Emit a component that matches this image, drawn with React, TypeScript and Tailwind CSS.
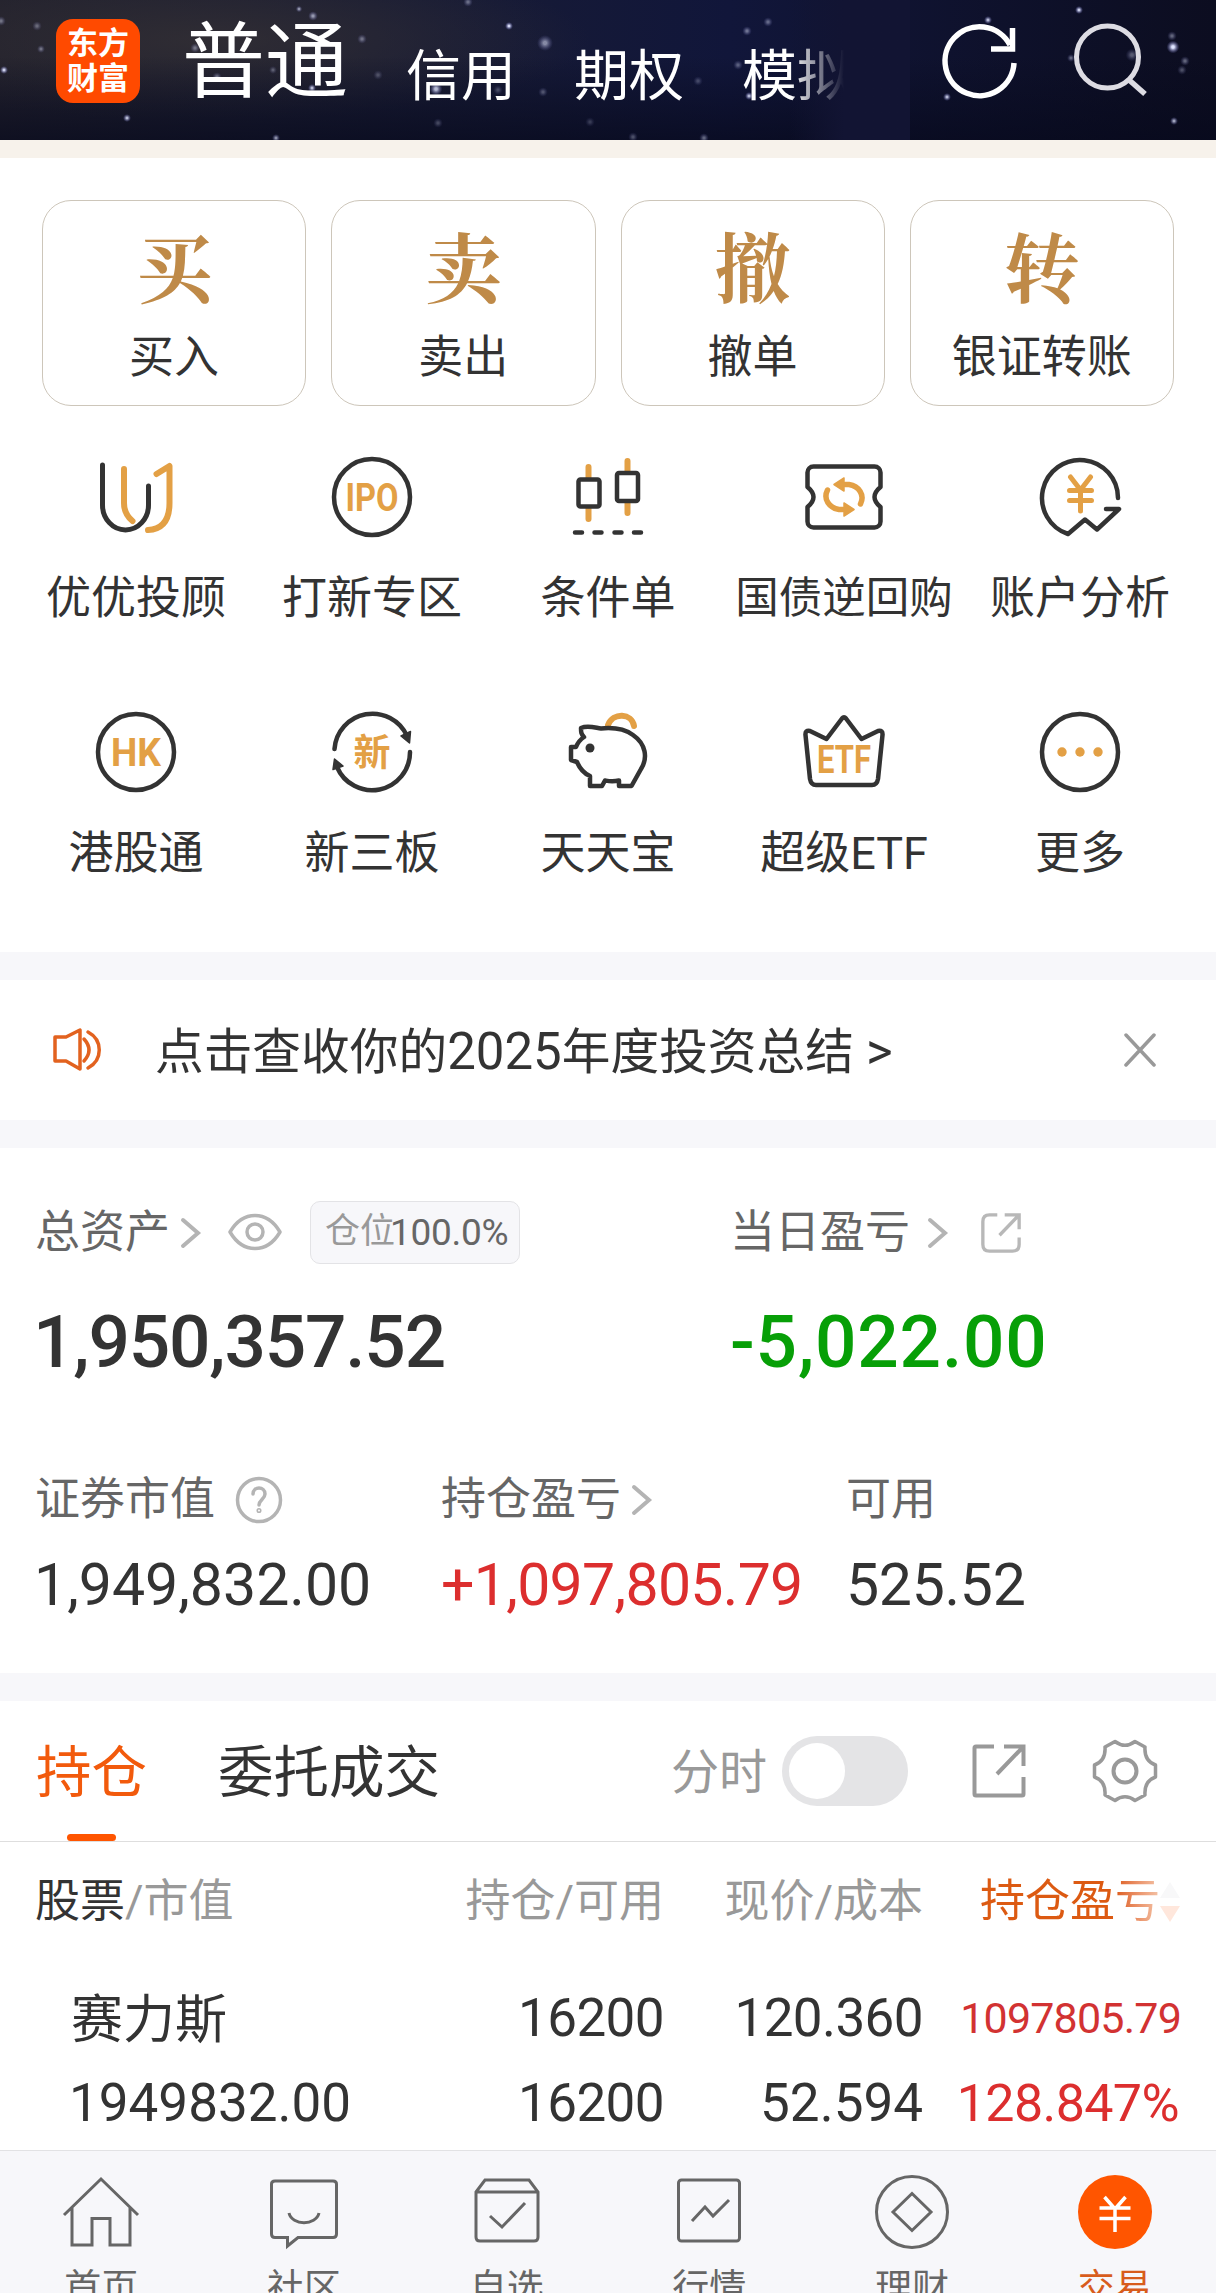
import type { ReactNode } from 'react'

const DARK = '#333333'
const GOLD = '#e3a045'

interface Tool {
  label: string
  icon: ReactNode
  labelClass?: string
}

const actions = [
  { glyph: '买', label: '买入' },
  { glyph: '卖', label: '卖出' },
  { glyph: '撤', label: '撤单' },
  { glyph: '转', label: '银证转账' },
]

// x, y, radius, opacity
const stars = [
  [4, 70, 2.5, 0.9], [1, 21, 3, 0.4], [37, 26, 3, 0.35], [41, 49, 2.5, 0.4], [127, 118, 2.5, 0.8],
  [299, 9, 2, 0.6], [313, 16, 3, 0.6], [362, 39, 3, 0.4], [195, 48, 3, 0.4], [217, 77, 3, 0.4],
  [273, 70, 2.5, 0.3], [312, 88, 2.5, 0.8], [276, 138, 2.5, 0.6], [468, 2, 3, 0.4], [509, 26, 2.5, 0.95],
  [545, 43, 5, 0.55], [436, 89, 4, 0.8], [378, 75, 3, 0.25], [543, 92, 3, 0.3], [438, 123, 3, 0.25],
  [498, 90, 3, 0.25], [590, 122, 3, 0.2], [633, 137, 3, 0.3], [704, 138, 3, 0.4], [747, 31, 3, 0.45],
  [768, 22, 3, 0.4], [738, 65, 3, 0.35], [698, 81, 3, 0.25], [749, 96, 2.5, 0.8], [947, 97, 2.5, 0.8],
  [988, 20, 2.5, 0.8], [1079, 10, 2.5, 0.9], [1173, 47, 4, 1], [1172, 36, 3, 0.4], [1185, 61, 3, 0.4],
  [1182, 70, 3, 0.3], [1174, 121, 2.5, 0.7], [1071, 58, 2.5, 0.4], [1011, 76, 2.5, 0.5], [1132, 55, 4, 0.35],
]

function Icon({ children, size = 96 }: { children: ReactNode; size?: number }) {
  const h = size / 2
  return (
    <svg
      width={size}
      height={size}
      viewBox={`${-h} ${-h} ${size} ${size}`}
      fill="none"
      strokeLinecap="round"
      strokeLinejoin="round"
      className="block shrink-0"
    >
      {children}
    </svg>
  )
}

function IconText({ children, width, y, size }: { children: string; width: number; y: number; size: number }) {
  return (
    <text
      x={-width / 2}
      y={y}
      textLength={width}
      lengthAdjust="spacingAndGlyphs"
      fontSize={size}
      fill={GOLD}
      className="font-['Roboto','Noto_Sans_CJK_SC',sans-serif] font-bold"
    >
      {children}
    </text>
  )
}

const tools: Tool[] = [
  {
    label: '优优投顾',
    icon: (
      <Icon>
        <path d="M-33.5 -32V8a23 25 0 0 0 46 0V-11" stroke={DARK} strokeWidth={5} />
        <path d="M-12 -28V6Q-12 17 -3.5 24" stroke={GOLD} strokeWidth={6} />
        <path d="M20.5 -23L33.5 -31V6Q33.5 32 12 33" stroke={GOLD} strokeWidth={6} />
      </Icon>
    ),
  },
  {
    label: '打新专区',
    icon: (
      <Icon>
        <circle r={38} stroke={DARK} strokeWidth={4.5} />
        <IconText width={53} y={13.5} size={38}>IPO</IconText>
      </Icon>
    ),
  },
  {
    label: '条件单',
    icon: (
      <Icon>
        <path d="M-19.5 -30V-19M-19.5 11V22M19.5 -36V-26M19.5 6V16" stroke={GOLD} strokeWidth={6} />
        <rect x={-29.5} y={-17.5} width={21} height={27} rx={2} stroke={DARK} strokeWidth={4.5} />
        <rect x={9} y={-24} width={21} height={28} rx={2} stroke={DARK} strokeWidth={4.5} />
        <path d="M-33 35.5h7M-13.500 35.500h7M6.500 35.500h7M26 35.500h7" stroke={DARK} strokeWidth={4.5} />
      </Icon>
    ),
  },
  {
    label: '国债逆回购',
    labelClass: 'text-[43.5px]',
    icon: (
      <Icon>
        <path
          d="M-30.500 -30.500H30.500A6 6 0 0 1 36.500 -24.500V-10Q24.500 0 36.500 10V24.500A6 6 0 0 1 30.500 30.500H-30.500A6 6 0 0 1 -36.500 24.500V10Q-24.500 0 -36.500 -10V-24.500A6 6 0 0 1 -30.500 -30.500Z"
          stroke={DARK}
          strokeWidth={4.5}
        />
        <path d="M1 -12.500H5C15 -11 21 -2 16.500 7M-1 12.500H-5C-15 11 -21 2 -16.500 -7" stroke={GOLD} strokeWidth={5.5} />
        <path d="M-10 -12.500L0 -19V-6ZM10 12.500L0 19V6Z" fill={GOLD} stroke={GOLD} strokeWidth={1.5} />
      </Icon>
    ),
  },
  {
    label: '账户分析',
    icon: (
      <Icon>
        <path d="M38 1A38 38 0 1 0 -12 37L5 22.500L17 32.500L39 12H26" stroke={DARK} strokeWidth={4.5} />
        <path d="M-9.500 -20L.5 -7L10.500 -20M.5 -7V14M-10.500 -6.500H11.500M-10.500 3.500H11.500" stroke={GOLD} strokeWidth={5} />
      </Icon>
    ),
  },
  {
    label: '港股通',
    icon: (
      <Icon>
        <circle r={38} stroke={DARK} strokeWidth={4.5} />
        <IconText width={50} y={13.5} size={38}>HK</IconText>
      </Icon>
    ),
  },
  {
    label: '新三板',
    icon: (
      <Icon>
        <path d="M-37.500 -3A38 38 0 0 1 35 -16M38 0A38 38 0 0 1 -35 15" stroke={DARK} strokeWidth={4.5} />
        <path d="M29 -16L38.500 -20.500L37.500 -9ZM-29 14L-39 17.500L-37.500 7Z" fill={DARK} stroke={DARK} strokeWidth={1.5} />
        <IconText width={37} y={14} size={37}>新</IconText>
      </Icon>
    ),
  },
  {
    label: '天天宝',
    icon: (
      <Icon>
        <path d="M0 -27C5 -40 24 -39 26 -26" stroke={GOLD} strokeWidth={6} />
        <path
          d="M-27 -24C-20 -27 -12 -24 -7 -23.500C8 -25 18 -22 25 -17C38 -8 40 6 33 17L23.500 34H11V28.500C4 30 0 29 -3 28.500L-6 34H-18V24C-25 21 -28 17 -31 10L-37 8V-5H-32C-30 -10 -27 -13 -24 -15C-27 -18 -27 -20 -27 -24Z"
          stroke={DARK}
          strokeWidth={4.5}
        />
        <circle cx={-18} cy={-4} r={4.5} fill={DARK} />
      </Icon>
    ),
  },
  {
    label: '超级ETF',
    icon: (
      <Icon>
        <path
          d="M-2 -33.500Q0 -36 2 -33.500L17.500 -13L34 -21Q39 -22 38.500 -17L34 27Q33 33 28 33H-28Q-33 33 -34 27L-38.500 -17Q-39 -22 -34 -21L-17.500 -13Z"
          stroke={DARK}
          strokeWidth={4.5}
        />
        <IconText width={54} y={20.5} size={38}>ETF</IconText>
      </Icon>
    ),
  },
  {
    label: '更多',
    icon: (
      <Icon>
        <circle r={38} stroke={DARK} strokeWidth={4.5} />
        <g fill={GOLD}>
          <circle cx={-18} r={4.7} />
          <circle r={4.7} />
          <circle cx={18} r={4.7} />
        </g>
      </Icon>
    ),
  },
]

const navItems = [
  {
    label: '首页',
    icon: <path d="M-37 3L0 -33L37 3M-29 -4V33H-9V6.500H9V33H29V-4" />,
  },
  {
    label: '社区',
    icon: (
      <>
        <path d="M-29 -31H29Q32.500 -31 32.500 -28V22Q32.500 25.500 29 25.500H-6L-16.500 34V25.500H-29Q-32.500 25.500 -32.500 22V-28Q-32.500 -31 -29 -31Z" />
        <path d="M-15 1C-12 14 12 14 15 1" />
      </>
    ),
  },
  {
    label: '自选',
    icon: (
      <>
        <path d="M-31 -20L-22 -32H22L31 -20V25Q31 29 27 29H-27Q-31 29 -31 25ZM-31 -20H31" />
        <path d="M-17 4L-5 15L18 -9" />
      </>
    ),
  },
  {
    label: '行情',
    icon: (
      <>
        <rect x={-30.5} y={-32} width={61} height={61} rx={3} />
        <path d="M-17 9L-4 -5L4 4L20 -12" />
      </>
    ),
  },
  {
    label: '理财',
    icon: (
      <>
        <circle r={35.5} />
        <path d="M0 -18.500L19 0L0 18.500L-19 0Z" />
      </>
    ),
  },
]

function Chevron() {
  return (
    <svg width={22} height={34} viewBox="0 0 22 34" fill="none" stroke="#b4b4b4" strokeWidth={4} className="block shrink-0" strokeLinecap="round">
      <path d="M3 4L18 17L3 30" />
    </svg>
  )
}

function Header() {
  return (
    <header className="relative flex h-[140px] overflow-hidden bg-linear-to-r from-[#22212d] via-[#11163a] via-60% to-[#0c0d20] pl-14 text-white">
      <svg width={1216} height={140} className="absolute inset-0">
        <defs>
          <linearGradient id="shade" x1="0" y1="0" x2="0" y2="1">
            <stop offset="0.4" stopColor="#07091c" stopOpacity="0" />
            <stop offset="1" stopColor="#07091c" stopOpacity="0.7" />
          </linearGradient>
          <radialGradient id="star">
            <stop offset="0.2" stopColor="#dfe4ff" />
            <stop offset="1" stopColor="#6a6ab8" stopOpacity="0" />
          </radialGradient>
          <radialGradient id="dust">
            <stop offset="0" stopColor="#343034" stopOpacity="0.8" />
            <stop offset="1" stopColor="#343034" stopOpacity="0" />
          </radialGradient>
        </defs>
        <ellipse cx="210" cy="40" rx="380" ry="80" fill="url(#dust)" />
        <rect width="1216" height="140" fill="url(#shade)" />
        {stars.map(([x, y, r, o], i) => (
          <circle key={i} cx={x} cy={y} r={r * 1.6} fill="url(#star)" opacity={o} />
        ))}
      </svg>
      <div className="relative mt-[19px] flex h-[84px] w-[84px] flex-col items-center justify-center rounded-[17px] bg-[#ff4a00] text-[31px] leading-[35px] font-bold">
        <span>东方</span>
        <span>财富</span>
      </div>
      <nav className="relative flex h-[124px] items-center whitespace-nowrap">
        <span className="mt-[2px] ml-[42px] w-[166px] text-[83px]">普通</span>
        <span className="mt-[29px] ml-[58px] w-[110px] text-[55px]">信用</span>
        <span className="mt-[29px] ml-[58px] w-[110px] text-[55px]">期权</span>
        <span className="mt-[29px] ml-[58px] w-[110px] text-[55px]">模拟</span>
      </nav>
      {/* fades the last tab out under the action icons */}
      <div className="absolute top-0 left-[790px] h-full w-[120px] bg-linear-to-r from-[#12143300] via-[#121433] via-45% to-[#121433]" />
      <div className="absolute top-0 right-0 flex h-full items-start">
        <div className="mt-[14px] mr-[35px]">
          <Icon>
            <path d="M34 1A34.500 34.500 0 1 1 30 -17" stroke="#fff" strokeWidth={5.5} strokeLinecap="butt" />
            <path d="M32.500 -34V-13H11" stroke="#fff" strokeWidth={5.5} strokeLinecap="butt" strokeLinejoin="miter" />
          </Icon>
        </div>
        <div className="mt-[13px] mr-[57px]">
          <Icon>
            <circle cx={-3.500} cy={-4} r={31} stroke="#dddce3" strokeWidth={5} />
            <path d="M17 18L34 33" stroke="#dddce3" strokeWidth={5.5} strokeLinecap="butt" />
          </Icon>
        </div>
      </div>
    </header>
  )
}

function ShareIcon({ size, color, round, stroke }: { size: number; color: string; round: number; stroke: number }) {
  const r = round
  return (
    <svg width={size} height={size} viewBox="0 0 54 54" fill="none" stroke={color} strokeWidth={stroke} className="block shrink-0">
      <path d={`M22 2.500H${2.5 + r}Q2.500 2.500 2.500 ${2.5 + r}V${51.5 - r}Q2.500 51.500 ${2.5 + r} 51.500H${51.5 - r}Q51.500 51.500 51.500 ${51.5 - r}V33`} />
      <path d="M32 2.500H51.500V22M51 3L25 30" />
    </svg>
  )
}

function Actions() {
  return (
    <section className="border-t-[18px] border-[#f7f2eb] px-[18px]">
      <div className="mx-6 mt-[42px] grid grid-cols-4 gap-[25px]">
        {actions.map((a) => (
          <button key={a.label} className="flex h-[206px] flex-col items-center rounded-[29px] border border-[#cdc6ba]">
            <span className="mt-[26px] h-[76px] font-['Noto_Serif_CJK_SC','Noto_Sans_CJK_SC',serif] text-[76px] leading-[76px] font-bold text-[#bf8a48]">
              {a.glyph}
            </span>
            <span className="mt-[29px] text-[45px] leading-[52px]">{a.label}</span>
          </button>
        ))}
      </div>
      <div className="mt-[43px] grid grid-cols-5 gap-y-[79px] pb-[72px]">
        {tools.map((t) => (
          <div key={t.label} className="flex flex-col items-center whitespace-nowrap">
            {t.icon}
            <span className={`mt-[28px] leading-[52px] ${t.labelClass ?? 'text-[45px]'}`}>{t.label}</span>
          </div>
        ))}
      </div>
    </section>
  )
}

function Notice() {
  return (
    <section className="flex h-[196px] items-center border-y-[28px] border-[#f7f7fa] pr-[60px] pl-[52px]">
      <Icon size={50}>
        <path d="M-22 -13H-11L3 -20V19L-11 11H-22ZM7 -11Q17 0 7 11M11 -18C26 -10 26 10 11 18" stroke="#e2621f" strokeWidth={3.5} />
      </Icon>
      <span className="mt-[5px] ml-[53px] flex-1 text-[48.7px] leading-[60px]">
        点击查收你的<span className="text-[51px]">2025</span>年度投资总结 <span className="text-[51px]">&gt;</span>
      </span>
      <svg width={32} height={34} viewBox="0 0 32 34" stroke="#999" strokeWidth={3.5} strokeLinecap="round">
        <path d="M2 2L30 32M30 2L2 32" />
      </svg>
    </section>
  )
}

function Assets() {
  return (
    <section className="h-[553px] border-b-[28px] border-[#f7f7fa] pl-[35px] text-[#666]">
      <div className="flex pt-[53px]">
        <div className="w-[695px]">
          <div className="flex h-[63px] items-center">
            <span className="text-[45px]">总资产</span>
            <span className="ml-[10px]"><Chevron /></span>
            <svg width={54} height={38} viewBox="-27 -19 54 38" fill="none" stroke="#b4b4b4" strokeWidth={3.5} className="mb-[2px] ml-[26px] block">
              <path d="M-25 0C-12 -22 12 -22 25 0C12 22 -12 22 -25 0Z" strokeLinejoin="round" />
              <circle r={8} />
            </svg>
            <span className="ml-[28px] flex h-[63px] w-[210px] items-center rounded-[10px] border border-[#e3e3e6] bg-[#f7f7fa] pl-[14px] text-[35px] whitespace-nowrap">
              <span className="w-[65px] text-[#999]">仓位</span>
              <span className="text-[37px] tracking-[-0.3px]">100.0%</span>
            </span>
          </div>
          <div className="-ml-[2px] mt-[36px] text-[73px] leading-[84px] font-medium tracking-[-1.2px] text-[#333]">1,950,357.52</div>
        </div>
        <div>
          <div className="flex h-[63px] items-center">
            <span className="text-[45px]">当日盈亏</span>
            <span className="ml-[17px]"><Chevron /></span>
            <span className="ml-[32px]"><ShareIcon size={40} color="#b8b8b8" round={9} stroke={4.5} /></span>
          </div>
          <div className="mt-[36px] text-[73px] leading-[84px] font-medium tracking-[0.8px] text-[#079f07]">-5,022.00</div>
        </div>
      </div>
      <div className="mt-[84px] flex">
        <div className="w-[406px]">
          <div className="flex h-[64px] items-center">
            <span className="text-[45px]">证券市值</span>
            <svg width={48} height={48} viewBox="-24 -24 48 48" fill="none" stroke="#b4b4b4" strokeWidth={3.5} className="ml-[20px] block" strokeLinecap="round">
              <circle r={21.5} />
              <path d="M-6 -6C-6 -14 6 -14 6 -6C6 -1 0 0 0 5" />
              <circle cy={10.5} r={0.8} />
            </svg>
          </div>
          <div className="-ml-[1px] mt-[19px] text-[59px] leading-[68px] text-[#333]">1,949,832.00</div>
        </div>
        <div className="w-[405px]">
          <div className="flex h-[64px] items-center">
            <span className="text-[45px]">持仓盈亏</span>
            <span className="ml-[10px]"><Chevron /></span>
          </div>
          <div className="mt-[19px] text-[59px] leading-[68px] tracking-[-0.7px] text-[#dc2e2e]">+1,097,805.79</div>
        </div>
        <div>
          <div className="flex h-[64px] items-center text-[45px]">可用</div>
          <div className="mt-[19px] text-[59px] leading-[68px] tracking-[-0.3px] text-[#333]">525.52</div>
        </div>
      </div>
    </section>
  )
}

function Holdings() {
  return (
    <section className="h-[449px]">
      <div className="flex h-[141px] items-center border-b border-[#dedede] pl-9">
        <div className="relative flex h-full w-[111px] items-center pt-[6px] text-[55.5px] text-[#f25a0c]">
          持仓
          <span className="absolute bottom-0 left-[31px] h-[7px] w-[49px] rounded-full bg-[#ff5500]" />
        </div>
        <span className="mt-[6px] ml-[71px] w-[453px] text-[55.5px]">委托成交</span>
        <span className="mt-[4px] w-[111px] text-[48px] text-[#999]">分时</span>
        <span className="flex h-[70px] w-[126px] items-center rounded-full bg-[#e4e4e6] px-[7px]">
          <span className="h-14 w-14 rounded-full bg-white" />
        </span>
        <span className="ml-[64px]"><ShareIcon size={54} color="#999" round={1.5} stroke={4} /></span>
        <span className="ml-[64px]">
          <Icon size={70}>
            <path
              d="M-10 -29.500Q0 -22 10 -29.500L20 -24Q19 -10 30.500 -6V6Q19 10 20 24L10 29.500Q0 22 -10 29.500L-20 24Q-19 10 -30.500 6V-6Q-19 -10 -20 -24Z"
              stroke="#999"
              strokeWidth={3.5}
            />
            <circle r={11.5} stroke="#999" strokeWidth={4} />
          </Icon>
        </span>
      </div>
      <div className="flex h-[120px] items-center text-[45px] whitespace-nowrap text-[#999]">
        <span className="w-[401px] pl-[35px]"><span className="text-[#333]">股票</span>/市值</span>
        <span className="w-[263px] text-right">持仓/可用</span>
        <span className="w-[259px] text-right">现价/成本</span>
        <span className="flex w-[293px] items-center pl-[57px]">
          <span className="bg-linear-to-r from-[#dc5a12] from-75% to-[#f3c4a8] bg-clip-text text-transparent">持仓盈亏</span>
          <svg width={20} height={42} viewBox="0 0 20 42" className="block">
            <path d="M10 1L20 17H0Z" fill="#f8f8f9" />
            <path d="M10 41L20 25H0Z" fill="#ffe7dc" />
          </svg>
        </span>
      </div>
      <div className="flex flex-col pt-[14px] text-[53px] tracking-[-0.6px]">
        <div className="flex h-[85px] items-center">
          <span className="mt-[5px] w-[401px] pl-[71px] text-[52px] tracking-normal">赛力斯</span>
          <span className="w-[263px] text-right">16200</span>
          <span className="w-[259px] text-right">120.360</span>
          <span className="w-[258px] text-right text-[43px] tracking-[-0.8px] text-[#d23232]">1097805.79</span>
        </div>
        <div className="flex h-[85px] items-center">
          <span className="w-[401px] pl-[69px] tracking-normal">1949832.00</span>
          <span className="w-[263px] text-right">16200</span>
          <span className="w-[259px] text-right tracking-normal">52.594</span>
          <span className="w-[256px] text-right text-[52px] text-[#dc2e2e]">128.847%</span>
        </div>
      </div>
    </section>
  )
}

function TabBar() {
  return (
    <footer className="grid h-[143px] grid-cols-6 overflow-hidden border-t border-[#e2e2e4] bg-[#f7f7fa] pt-[21px] text-[37px] text-[#666]">
      {navItems.map((n) => (
        <div key={n.label} className="flex flex-col items-center">
          <Icon size={80}>
            <g stroke="#666666" strokeWidth={3} strokeLinejoin="miter" strokeLinecap="butt">{n.icon}</g>
          </Icon>
          <span className="mt-[14px] leading-[46px]">{n.label}</span>
        </div>
      ))}
      <div className="flex flex-col items-center text-[#d85c1c]">
        <Icon size={80}>
          <circle r={37} fill="#ff5500" />
          <path d="M-10.500 -15L0 -3L10.500 -15M0 -3V20M-15.500 -4H15.500M-15.500 6.500H15.500" stroke="#fff" strokeWidth={3.5} strokeLinecap="butt" />
        </Icon>
        <span className="mt-[14px] leading-[46px]">交易</span>
      </div>
    </footer>
  )
}

export default function App() {
  return (
    <div className="h-[2293px] w-[1216px] overflow-hidden bg-white font-['Roboto','Noto_Sans_CJK_SC',sans-serif] text-[#333]">
      <Header />
      <Actions />
      <Notice />
      <Assets />
      <Holdings />
      <TabBar />
    </div>
  )
}
